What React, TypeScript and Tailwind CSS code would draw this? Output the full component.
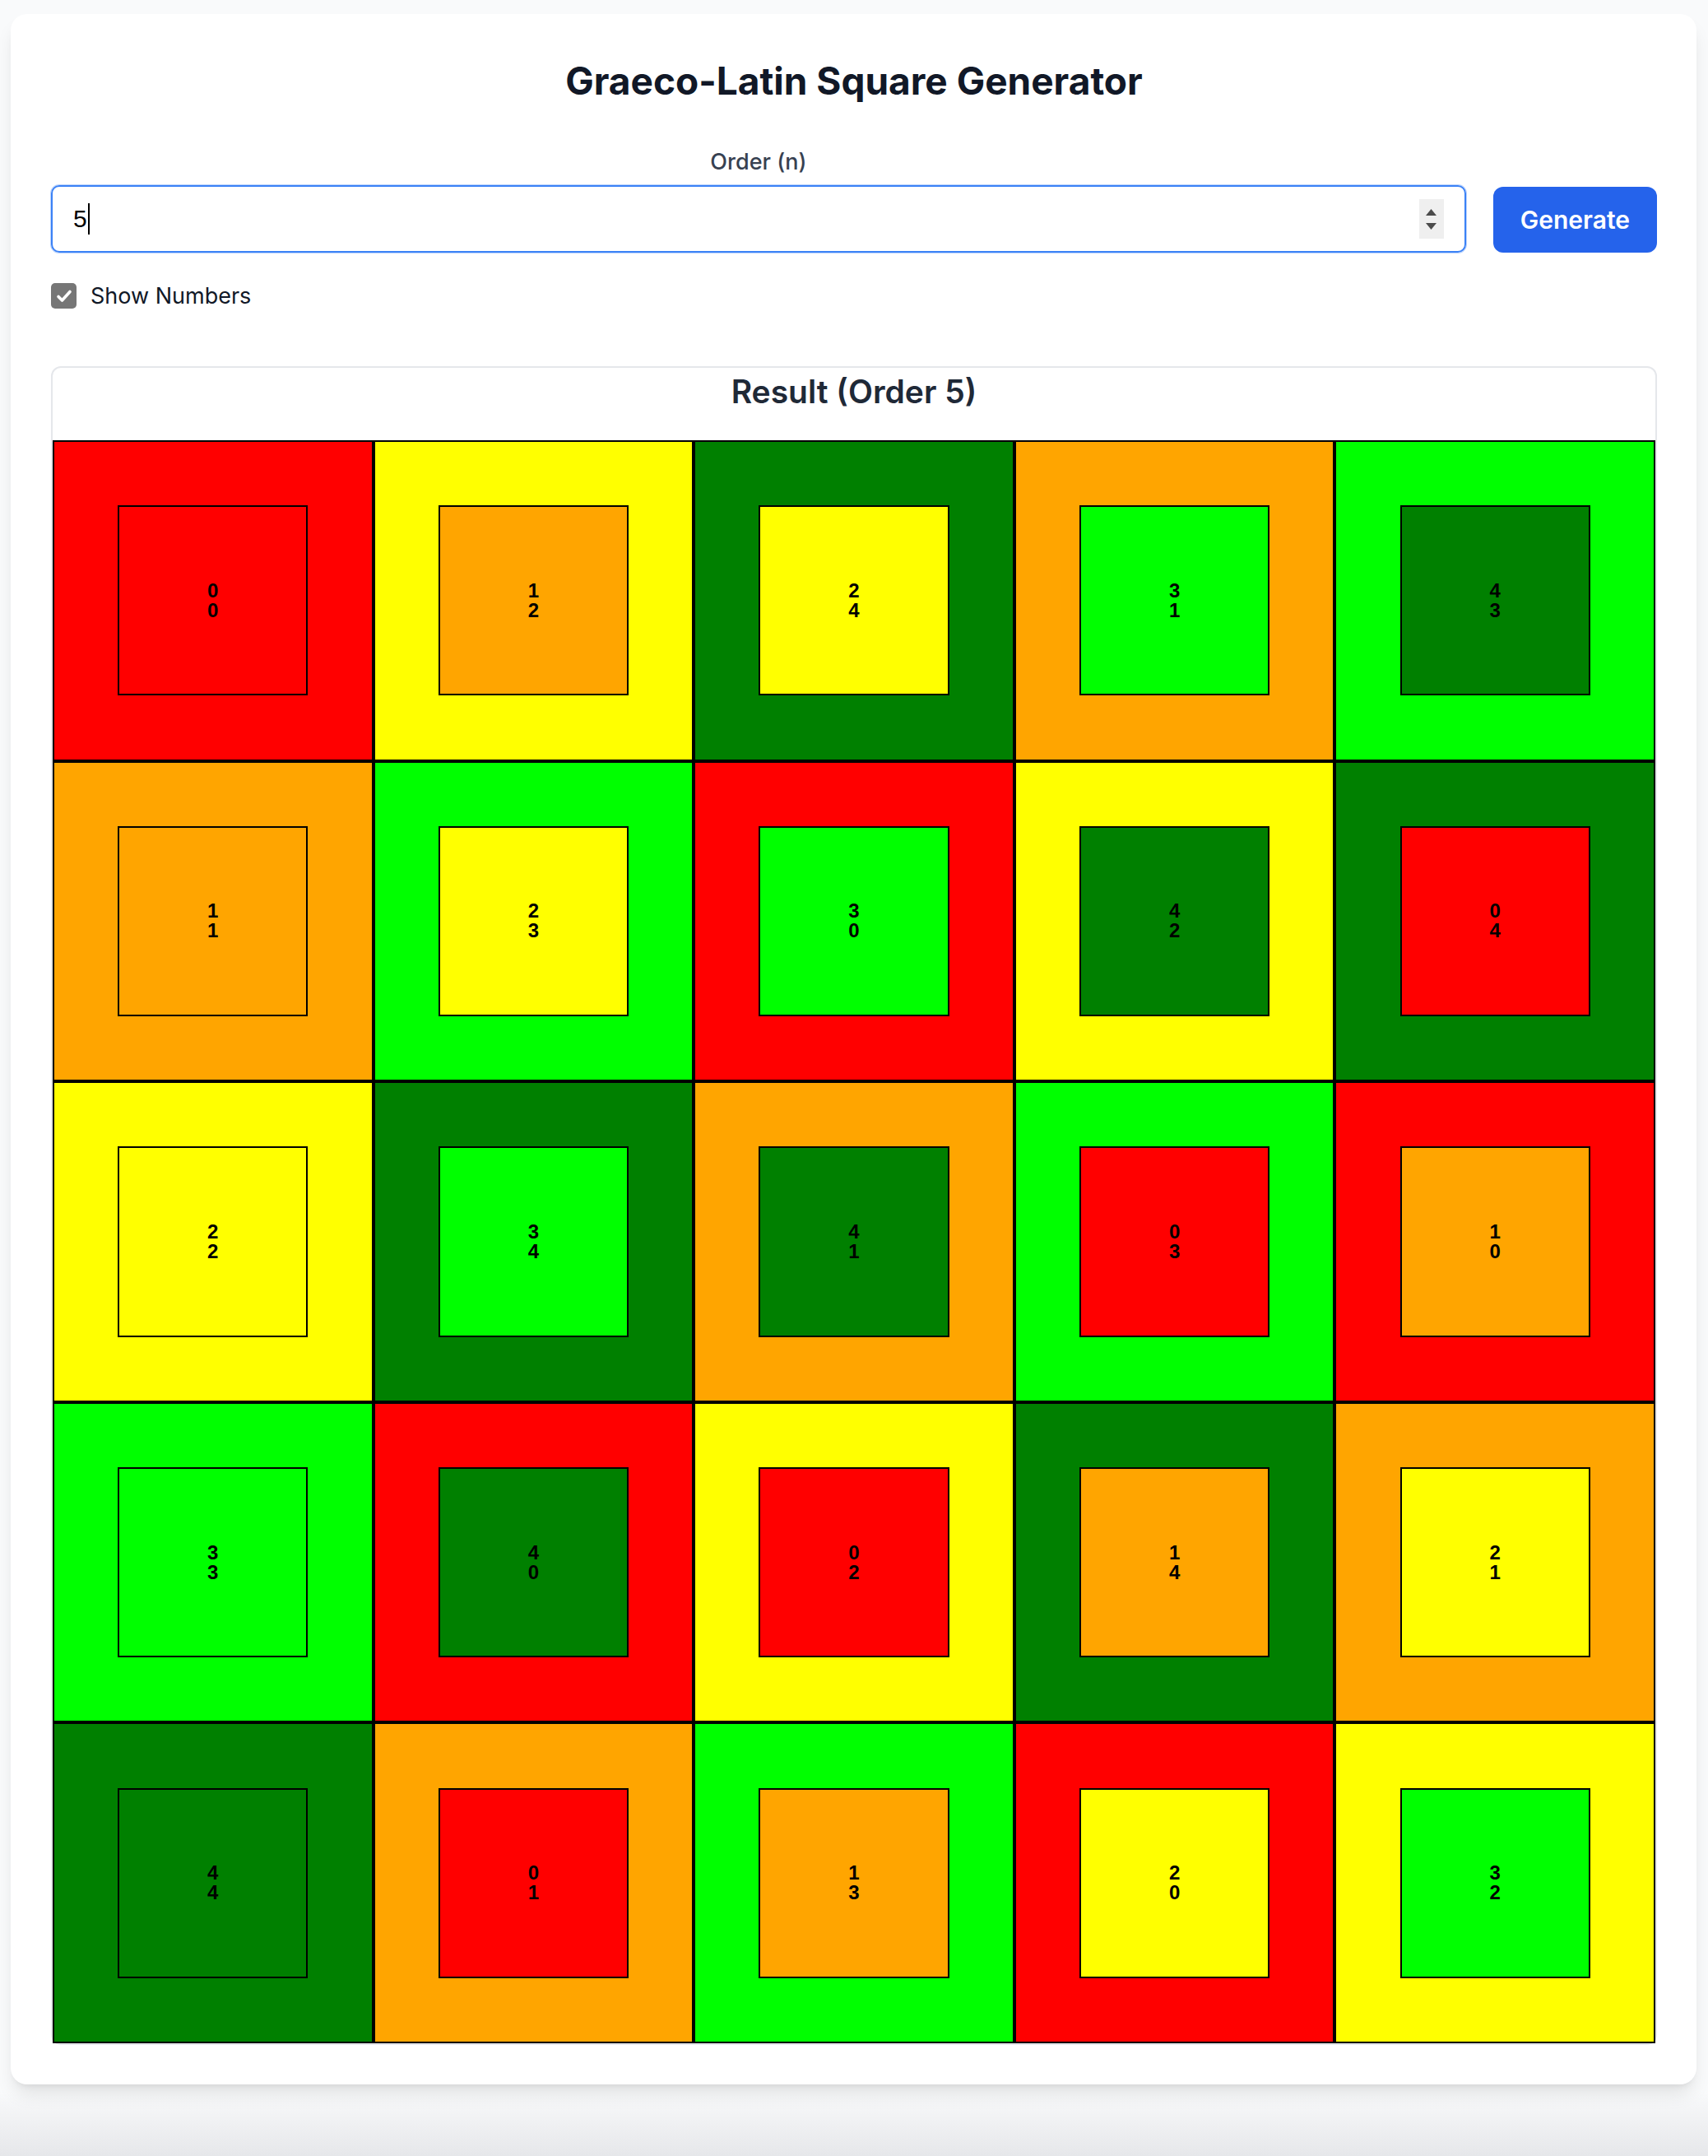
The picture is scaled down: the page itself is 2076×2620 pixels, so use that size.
import React from "react";

const BG = ["bg-[#ff0000]", "bg-[#ffa500]", "bg-[#ffff00]", "bg-[#00ff00]", "bg-[#008000]"];

const N = 5;

function Cell({ top, bottom }: { top: number; bottom: number }) {
  return (
    <div className={`flex aspect-square items-center justify-center border-2 border-black ${BG[bottom]}`}>
      <div
        className={`flex h-[60%] w-[60%] flex-col items-center justify-center border-2 border-black ${BG[top]}`}
      >
        <span className="font-['Liberation_Sans',Arial,sans-serif] text-[24px] font-bold leading-[24px] text-black">
          {top}
        </span>
        <span className="font-['Liberation_Sans',Arial,sans-serif] text-[24px] font-bold leading-[24px] text-black">
          {bottom}
        </span>
      </div>
    </div>
  );
}

export default function App() {
  const rows = Array.from({ length: N }, (_, i) => Array.from({ length: N }, (_, j) => ({ top: (i + j) % N, bottom: (i + 2 * j) % N })));

  return (
    <div className="min-h-[2620px] bg-[linear-gradient(to_bottom,#f9fafb_97%,#e6e7ea)] pl-[13px] pr-[14px] pt-[17px] font-['Inter',sans-serif]">
      <div className="rounded-[20px] bg-white pb-[48px] pl-[49px] pr-[48px] pt-[48px] shadow-[0_15px_22px_-4px_rgba(0,0,0,0.1),0_6px_9px_-6px_rgba(0,0,0,0.1)]">
        <h1 className="mt-[6px] text-center text-[46px] font-bold leading-[54px] text-[#111827]">
          Graeco-Latin Square Generator
        </h1>

        <div className="mt-[54px] flex items-end gap-[33px]">
          <div className="flex flex-1 flex-col">
            <label className="mb-[10px] text-center text-[27px] font-medium leading-[36px] text-[#374151]">
              Order (n)
            </label>
            <div className="flex h-[82px] items-center rounded-[10px] border-2 border-[#3b82f6] pl-[25px] pr-[25px] shadow-[0_0_0_1px_rgba(59,130,246,0.35)]">
              <span className="font-['Liberation_Sans',Arial,sans-serif] text-[30px] leading-none text-black">5</span>
              <span className="ml-[1px] h-[38px] w-[2px] bg-black" />
              <div className="ml-auto flex h-[48px] w-[30px] flex-col items-center justify-center gap-[9px] bg-[#efefef]">
                <svg width="13" height="8" viewBox="0 0 13 8">
                  <path d="M6.5 0L13 8H0z" fill="#4b4b4b" />
                </svg>
                <svg width="13" height="8" viewBox="0 0 13 8">
                  <path d="M0 0h13L6.5 8z" fill="#4b4b4b" />
                </svg>
              </div>
            </div>
          </div>
          <button className="h-[80px] rounded-[12px] bg-[#2563eb] px-[33px] text-[30px] font-semibold text-white">
            Generate
          </button>
        </div>

        <div className="mt-[37px] flex h-[31px] items-center gap-[17px]">
          <span className="flex h-[31px] w-[31px] items-center justify-center rounded-[5px] bg-[#767676]">
            <svg width="22" height="22" viewBox="0 0 22 22">
              <path d="M4 11.5l4.5 4.5L18 5.5" fill="none" stroke="white" strokeWidth="3.6" strokeLinecap="round" strokeLinejoin="round" />
            </svg>
          </span>
          <span className="text-[27px] leading-[36px] text-[#111827]">Show Numbers</span>
        </div>

        <div className="mt-[70px] rounded-[12px] border-2 border-[#e5e7eb]">
          <h2 className="mb-[32px] mt-[2px] text-center text-[39px] font-semibold leading-[54px] text-[#1f2937]">
            Result (Order {N})
          </h2>
          <div className="grid grid-cols-5">
            {rows.map((row, i) =>
              row.map((c, j) => <Cell key={`${i}-${j}`} top={c.top} bottom={c.bottom} />)
            )}
          </div>
        </div>
      </div>
    </div>
  );
}
